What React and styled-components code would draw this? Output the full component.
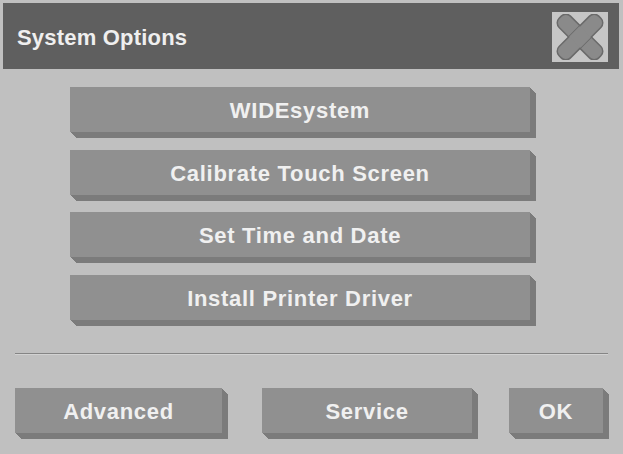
import React from "react";
import styled, { createGlobalStyle } from "styled-components";

const GlobalStyle = createGlobalStyle`
  html, body {
    margin: 0;
    padding: 0;
    background: #c0c0c0;
  }
  body {
    font-family: "Liberation Sans", Arial, sans-serif;
  }
`;

const Screen = styled.div`
  width: 623px;
  height: 454px;
  background: #c0c0c0;
  display: flex;
  flex-direction: column;
  overflow: hidden;
`;

const Header = styled.div`
  margin: 3px 4px 0 3px;
  height: 66px;
  background: #5f5f5f;
  display: flex;
  align-items: center;
  justify-content: space-between;
  padding: 0 11px 0 14px;
`;

const Title = styled.h1`
  margin: 0;
  padding-top: 3px;
  font-size: 22px;
  font-weight: 700;
  letter-spacing: 0.2px;
  color: #efefef;
`;

const CloseButton = styled.button`
  width: 56px;
  height: 50px;
  margin-top: 2px;
  padding: 0;
  border: none;
  background: #c6c6c6;
  display: flex;
  align-items: center;
  justify-content: center;
`;

const Menu = styled.div`
  display: flex;
  flex-direction: column;
  gap: 17.6px;
  padding: 18px 0 0 70px;
`;

const shadow = `
  1px 1px 0 #7b7b7b, 2px 2px 0 #7b7b7b, 3px 3px 0 #7b7b7b,
  4px 4px 0 #7b7b7b, 5px 5px 0 #7b7b7b, 6px 6px 0 #7b7b7b
`;

const Key = styled.button`
  width: ${(p) => p.$width}px;
  height: ${(p) => p.$height}px;
  padding: 3px 0 0;
  border: none;
  background: #909090;
  box-shadow: ${shadow};
  color: #f0f0f0;
  font-family: "Liberation Sans", Arial, sans-serif;
  font-size: 22px;
  font-weight: 700;
  letter-spacing: 0.7px;
  display: flex;
  align-items: center;
  justify-content: center;
`;

const Divider = styled.div`
  margin: 33px 15px 0 15px;
  height: 1px;
  background: #858585;
  border-bottom: 1px solid #d2d2d2;
`;

const Footer = styled.div`
  display: flex;
  padding: 33px 0 0 15px;
`;

const FooterSlot = styled.div`
  margin-left: ${(p) => p.$gap}px;
`;

const Arm = ({ angle }) => (
  <g transform={`rotate(${angle})`}>
    <rect x="-28" y="-8" width="56" height="16" rx="6.5" fill="#8a8a8a" stroke="#6a6a6a" strokeWidth="1.5" />
  </g>
);

const CloseIcon = () => (
  <svg width="48" height="46" viewBox="0 0 48 46">
    <g transform="translate(24 23)">
      <Arm angle={45} />
      <Arm angle={-45} />
      <g transform="rotate(45)">
        <rect x="-8" y="-7.2" width="16" height="14.4" fill="#8a8a8a" />
      </g>
    </g>
  </svg>
);

const items = [
  "WIDEsystem",
  "Calibrate Touch Screen",
  "Set Time and Date",
  "Install Printer Driver",
];

export default function App() {
  return (
    <Screen>
      <GlobalStyle />
      <Header>
        <Title>System Options</Title>
        <CloseButton aria-label="Close">
          <CloseIcon />
        </CloseButton>
      </Header>
      <Menu>
        {items.map((label) => (
          <Key key={label} $width={460} $height={45}>
            {label}
          </Key>
        ))}
      </Menu>
      <Divider />
      <Footer>
        <Key $width={207} $height={45}>Advanced</Key>
        <FooterSlot $gap={40}>
          <Key $width={210} $height={45}>Service</Key>
        </FooterSlot>
        <FooterSlot $gap={37}>
          <Key $width={94} $height={45}>OK</Key>
        </FooterSlot>
      </Footer>
    </Screen>
  );
}
